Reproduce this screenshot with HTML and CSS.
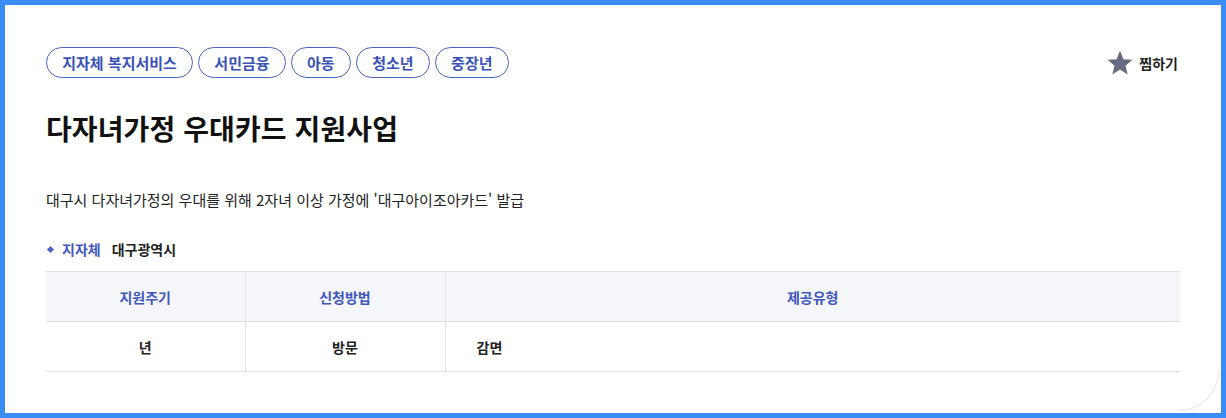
FILE: index.html
```html
<!DOCTYPE html>
<html lang="ko">
<head>
<meta charset="utf-8">
<title>다자녀가정 우대카드 지원사업</title>
<link rel="stylesheet" href="styles.css">
</head>
<body>
<div class="card">
  <div class="top-row">
    <ul class="tags">
      <li class="tag">지자체 복지서비스</li>
      <li class="tag">서민금융</li>
      <li class="tag">아동</li>
      <li class="tag">청소년</li>
      <li class="tag">중장년</li>
    </ul>
    <button class="fav" type="button">
      <svg class="star" viewBox="0 0 24 24" width="26" height="26" aria-hidden="true"><path d="M12 .8l3.2 7.7 8.3.6-6.4 5.4 2 8.1L12 18.1l-7.1 4.5 2-8.1L.5 9.1l8.3-.6z" fill="#676b80"/></svg>
      <span>찜하기</span>
    </button>
  </div>
  <h1 class="title">다자녀가정 우대카드 지원사업</h1>
  <p class="desc">대구시 다자녀가정의 우대를 위해 2자녀 이상 가정에 '대구아이조아카드' 발급</p>
  <div class="org">
    <span class="bullet"></span>
    <span class="org-label">지자체</span>
    <span class="org-name">대구광역시</span>
  </div>
  <table class="info">
    <thead>
      <tr><th class="c1">지원주기</th><th class="c2">신청방법</th><th>제공유형</th></tr>
    </thead>
    <tbody>
      <tr><td class="center">년</td><td class="center">방문</td><td class="left">감면</td></tr>
    </tbody>
  </table>
</div>
</body>
</html>
```

FILE: styles.css
```css
* { box-sizing: border-box; }
html, body { margin: 0; padding: 0; }
body {
  background: #3a8cf6;
  padding: 5px;
  font-family: "Noto Sans CJK KR", "Noto Sans", sans-serif;
  color: #111;
  height: 418px;
  overflow: hidden;
}
.card {
  position: relative;
  background: #fff;
  height: 408px;
  padding: 42px 41px 0 41px;
}
.card::after {
  content: "";
  position: absolute;
  right: 2px;
  bottom: 2px;
  width: 40px;
  height: 40px;
  border-right: 1px solid #e4e4e4;
  border-bottom: 1px solid #e4e4e4;
  border-bottom-right-radius: 40px;
}
.top-row {
  display: flex;
  justify-content: space-between;
  align-items: center;
}
.tags {
  display: flex;
  gap: 5px;
  list-style: none;
  margin: 0;
  padding: 0;
}
.tag {
  height: 31px;
  padding: 0 15.25px;
  border: 1px solid #4a63c4;
  border-radius: 16px;
  color: #3a52b4;
  font-size: 15px;
  font-weight: 700;
  line-height: 29px;
}
.fav {
  display: flex;
  align-items: center;
  gap: 6px;
  background: none;
  border: 0;
  padding: 0;
  margin-right: 2px;
  font-family: inherit;
  font-size: 14px;
  font-weight: 700;
  color: #222;
}
.title {
  margin: 31px 0 0 0;
  font-size: 28px;
  font-weight: 700;
  line-height: 39px;
  letter-spacing: 0.1px;
  color: #111;
}
.desc {
  margin: 41px 0 0 0;
  font-size: 15px;
  line-height: 22px;
  color: #222;
}
.org {
  display: flex;
  align-items: center;
  margin: 27px 0 0 2px;
  height: 22px;
  font-size: 14px;
  font-weight: 700;
}
.bullet {
  width: 5px;
  height: 5px;
  background: #4a63c4;
  transform: rotate(45deg);
  margin-right: 9px;
}
.org-label { color: #3f58bb; margin-right: 11px; }
.org-name { color: #222; }
.info {
  margin-top: 11px;
  width: 100%;
  border-collapse: collapse;
  font-size: 14px;
}
.info th, .info td {
  height: 50px;
  border-top: 1px solid #dedfe3;
  border-bottom: 1px solid #dedfe3;
  padding: 0;
}
.info th {
  background: #f5f6fa;
  color: #3f58bb;
  font-weight: 700;
  text-align: center;
}
.info th + th, .info td + td { border-left: 1px solid #e2e3e7; }
.info .c1 { width: 199px; }
.info .c2 { width: 200px; }
.info td { font-weight: 700; color: #222; }
.info td.center { text-align: center; }
.info td.left { text-align: left; padding-left: 31px; }
```
